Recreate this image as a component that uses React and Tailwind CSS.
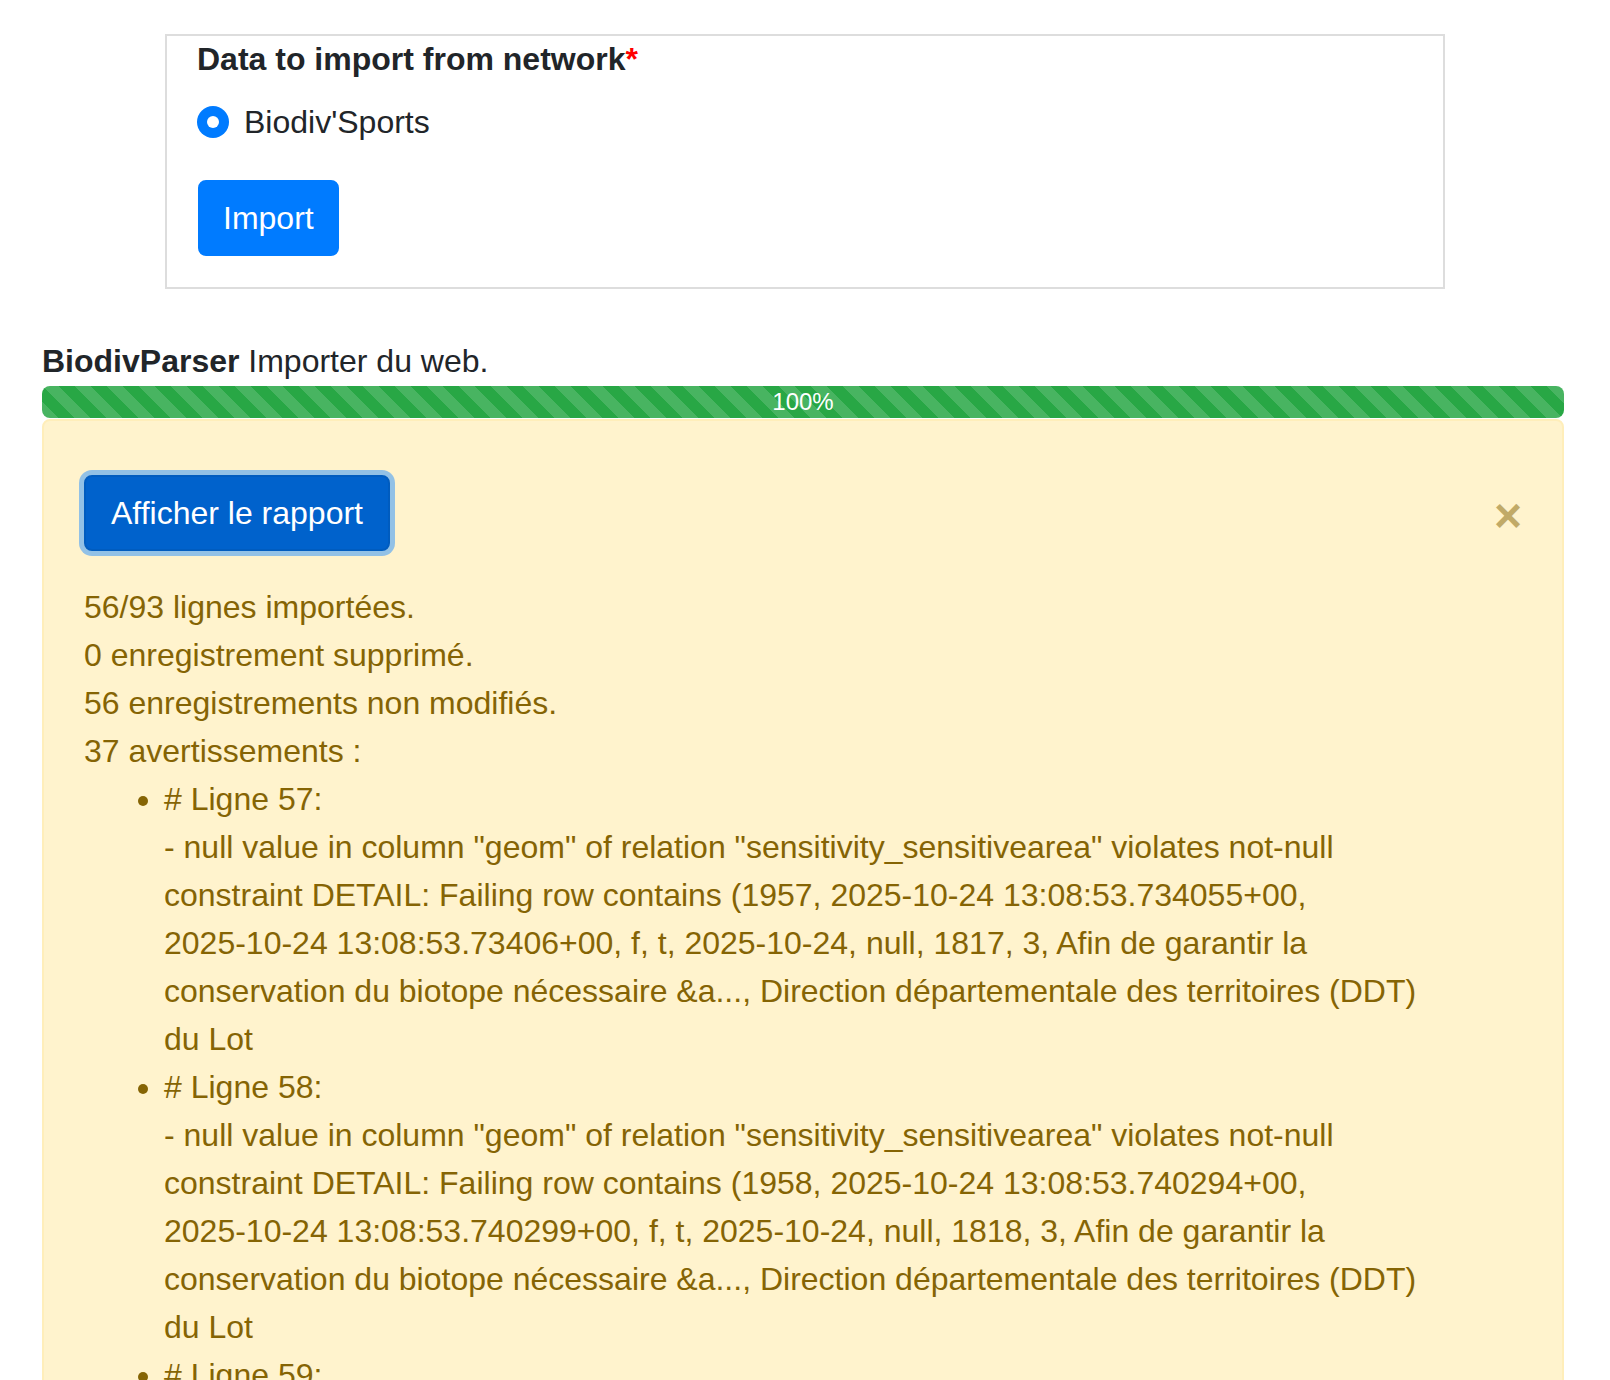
import React from "react";

const warnings = [
  {
    line: 57,
    text: '- null value in column "geom" of relation "sensitivity_sensitivearea" violates not-null constraint DETAIL: Failing row contains (1957, 2025-10-24 13:08:53.734055+00, 2025-10-24 13:08:53.73406+00, f, t, 2025-10-24, null, 1817, 3, Afin de garantir la conservation du biotope nécessaire &a..., Direction départementale des territoires (DDT) du Lot',
  },
  {
    line: 58,
    text: '- null value in column "geom" of relation "sensitivity_sensitivearea" violates not-null constraint DETAIL: Failing row contains (1958, 2025-10-24 13:08:53.740294+00, 2025-10-24 13:08:53.740299+00, f, t, 2025-10-24, null, 1818, 3, Afin de garantir la conservation du biotope nécessaire &a..., Direction départementale des territoires (DDT) du Lot',
  },
  {
    line: 59,
    text: '- null value in column "geom" of relation "sensitivity_sensitivearea" violates not-null constraint DETAIL: Failing row contains (1959, 2025-10-24 13:08:53.745811+00, 2025-10-24 13:08:53.745816+00, f, t, 2025-10-24, null, 1819, 3, Afin de garantir la conservation du biotope nécessaire &a..., Direction départementale des territoires (DDT) du Lot',
  },
];

// keep dates like 2025-10-24 on one line
const renderMessage = (text) =>
  text.split(/(\d{4}-\d{2}-\d{2})/).map((part, i) =>
    /^\d{4}-\d{2}-\d{2}$/.test(part) ? (
      <span key={i} className="whitespace-nowrap">
        {part}
      </span>
    ) : (
      part
    )
  );

const App = () => {
  return (
    <div className="min-h-screen bg-white font-['Liberation_Sans',Arial,sans-serif] text-[32px] leading-[48px] text-[#212529]">
      {/* Import form */}
      <div className="pt-[34px] flex justify-center">
        <div className="w-[1280px] border-2 border-[#dddddd] pl-[30px] pr-[32px] pb-[31px]">
          <div className="pt-[4px] font-bold leading-[38px]">
            Data to import from network<span className="text-[#ff0000]">*</span>
          </div>
          <label className="mt-[20px] flex items-center gap-[15px] h-[48px]">
            <span className="w-[32px] h-[32px] rounded-full bg-[#007bff] flex items-center justify-center">
              <span className="w-[12px] h-[12px] rounded-full bg-white" />
            </span>
            <span>Biodiv'Sports</span>
          </label>
          <button className="mt-[34px] ml-[1px] bg-[#007bff] border-2 border-[#007bff] text-white rounded-[8px] px-[23px] py-[12px] leading-[48px]">
            Import
          </button>
        </div>
      </div>

      {/* Parser progress */}
      <div className="mt-[48px] ml-[42px] w-[1522px]">
        <div>
          <span className="font-bold">BiodivParser</span> Importer du web.
        </div>
        <div className="mt-[1px] h-[32px] rounded-[8px] overflow-hidden bg-[#28a745] bg-[linear-gradient(45deg,rgba(255,255,255,.15)_25%,transparent_25%,transparent_50%,rgba(255,255,255,.15)_50%,rgba(255,255,255,.15)_75%,transparent_75%,transparent)] bg-[length:32px_32px] flex items-center justify-center text-white text-[24px] leading-[32px]">
          100%
        </div>

        <div className="relative mt-[1px] border-2 border-[#ffeeba] bg-[#fff3cd] text-[#856404] rounded-[8px] pl-[40px] pr-[124px] pt-[54px] pb-[24px]">
          <button className="bg-[#0062cc] border-2 border-[#005cbf] text-white rounded-[8px] px-[25px] py-[12px] leading-[48px] shadow-[0_0_0_5px_rgba(38,143,255,0.5)]">
            Afficher le rapport
          </button>
          <button className="absolute right-0 top-[71px] w-[108px] text-center text-[48px] leading-none font-bold text-[#856404] opacity-50">
            ×
          </button>

          <div className="mt-[32px]">
            <div>56/93 lignes importées.</div>
            <div>0 enregistrement supprimé.</div>
            <div>56 enregistrements non modifiés.</div>
            <div>37 avertissements :</div>
            <ul className="list-disc pl-[80px]">
              {warnings.map((w) => (
                <li key={w.line}>
                  # Ligne {w.line}:
                  <br />
                  {renderMessage(w.text)}
                </li>
              ))}
            </ul>
          </div>
        </div>
      </div>
    </div>
  );
};

export default App;
